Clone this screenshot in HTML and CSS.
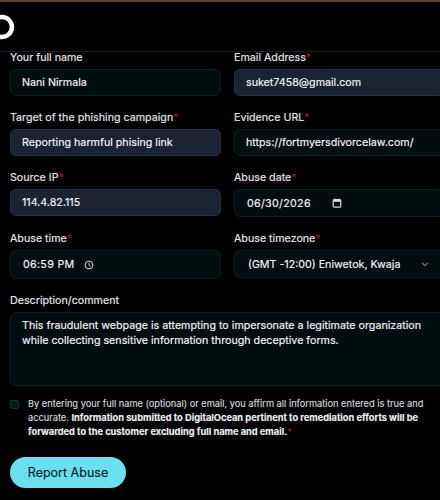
FILE: index.html
```html
<!DOCTYPE html>
<html lang="en">
<head>
    <meta charset="UTF-8">
    <meta name="viewport" content="width=device-width, initial-scale=1.0">
    <title>Report Abuse</title>
    <link rel="stylesheet" href="styles.css">
</head>
<body>
    <div class="topLine"></div>
    <header class="siteHeader">
        <svg class="logo" viewBox="0 0 32 32" width="30" height="30" aria-hidden="true">
            <path d="M16 29v-4.8a8.2 8.2 0 1 0-8.2-8.2H3A13 13 0 1 1 16 29z" fill="#fff"/>
            <rect x="11.2" y="24.2" width="4.8" height="4.8" fill="#fff"/>
            <rect x="7.4" y="24.2" width="3.8" height="3.8" fill="#fff"/>
            <rect x="4.6" y="21" width="3" height="3.2" fill="#fff"/>
        </svg>
    </header>
    <form class="abuseForm">
        <div class="field">
            <label class="fieldLabel">Your full name</label>
            <input class="control" type="text" value="Nani Nirmala">
        </div>
        <div class="field">
            <label class="fieldLabel">Email Address<span class="req">*</span></label>
            <input class="control filled" type="text" value="suket7458@gmail.com">
        </div>
        <div class="field">
            <label class="fieldLabel">Target of the phishing campaign<span class="req">*</span></label>
            <input class="control filled" type="text" value="Reporting harmful phising link">
        </div>
        <div class="field">
            <label class="fieldLabel">Evidence URL<span class="req">*</span></label>
            <input class="control" type="text" value="https://fortmyersdivorcelaw.com/">
        </div>
        <div class="field">
            <label class="fieldLabel">Source IP<span class="req">*</span></label>
            <input class="control filled" type="text" value="114.4.82.115">
        </div>
        <div class="field">
            <label class="fieldLabel">Abuse date<span class="req">*</span></label>
            <div class="control fakeInput dateInput">
                <span class="spaced">06/30/2026</span>
                <svg class="pickerIcon dateIcon" viewBox="0 0 12 12" width="10" height="10" aria-hidden="true">
                    <rect x="1.5" y="2" width="9" height="9" rx="1.2" fill="none" stroke="#d8dcdc" stroke-width="1.4"/>
                    <rect x="1.5" y="2" width="9" height="2.6" fill="#d8dcdc"/>
                    <rect x="3" y="0.8" width="1.3" height="1.6" fill="#d8dcdc"/>
                    <rect x="7.7" y="0.8" width="1.3" height="1.6" fill="#d8dcdc"/>
                </svg>
            </div>
        </div>
        <div class="field">
            <label class="fieldLabel">Abuse time<span class="req">*</span></label>
            <div class="control fakeInput timeInput">
                <span class="spaced">06:59 PM</span>
                <svg class="pickerIcon clockIcon" viewBox="0 0 12 12" width="10" height="10" aria-hidden="true">
                    <circle cx="6" cy="6" r="4.7" fill="none" stroke="#d8dcdc" stroke-width="1.2"/>
                    <path d="M6 3.2V6.2L8 7.4" fill="none" stroke="#d8dcdc" stroke-width="1.1"/>
                </svg>
            </div>
        </div>
        <div class="field">
            <label class="fieldLabel">Abuse timezone<span class="req">*</span></label>
            <div class="control fakeInput selectInput">
                <span>(GMT -12:00) Eniwetok, Kwaja</span>
                <svg class="chevron" viewBox="0 0 10 6" width="8" height="5" aria-hidden="true">
                    <path d="M1.5 1L5 4.5L8.5 1" fill="none" stroke="#c4cbcb" stroke-width="1.2"/>
                </svg>
            </div>
        </div>
        <div class="field descField wide">
            <label class="fieldLabel">Description/comment</label>
            <textarea class="control descBox">This fraudulent webpage is attempting to impersonate a legitimate organization while collecting sensitive information through deceptive forms.</textarea>
        </div>
        <div class="consent wide">
            <span class="checkBox"></span>
            <p class="consentText">By entering your full name (optional) or email, you affirm all information entered is true and accurate. <b>Information submitted to DigitalOcean pertinent to remediation efforts will be forwarded to the customer excluding full name and email.</b><span class="req">*</span></p>
        </div>
        <button class="submitBtn wide" type="button">Report Abuse</button>
    </form>
</body>
</html>
```

FILE: styles.css
```css
html, body{
    margin: 0;
    padding: 0;
    height: 500px;
    overflow: hidden;
}
body{
    background-color: #000;
    color: #e6eaea;
    font-family: Inter, "Liberation Sans", sans-serif;
    font-size: 10.7px;
    -webkit-text-stroke: 0.15px;
}
.topLine{
    height: 2px;
    background-color: #5a4233;
}
.siteHeader{
    height: 49px;
    display: flex;
    align-items: center;
    border-bottom: 1px solid #1d2122;
}
.logo{
    margin-left: -13px;
}
.abuseForm{
    display: grid;
    grid-template-columns: 211px 211px;
    column-gap: 13px;
    padding: 0 0 0 10px;
}
.field{
    display: flex;
    flex-direction: column;
    margin-bottom: 16px;
}
.descField{
    margin-bottom: 11px;
}
.wide{
    grid-column: 1 / 3;
}
.fieldLabel{
    display: block;
    line-height: 11px;
    margin-bottom: 6px;
    color: #e6e9ea;
}
.req{
    color: #7e2418;
}
.control{
    box-sizing: border-box;
    height: 27px;
    margin: 0;
    padding: 0 11px;
    background-color: #020d10;
    border: 1px solid #0f1f21;
    border-radius: 6px;
    color: #f5f7f7;
    font-family: inherit;
    font-size: 10.7px;
    outline: none;
    -webkit-text-stroke: 0.15px;
}
.filled{
    background-color: #1b2232;
    border-color: #263042;
}
.fakeInput{
    display: flex;
    align-items: center;
}
.dateInput{
    height: 28px;
    padding: 0 12px;
}
.timeInput{
    height: 29px;
    padding: 0 12px;
}
.spaced{
    letter-spacing: 0.3px;
}
.pickerIcon{
    flex: none;
}
.dateIcon{
    margin-left: 21px;
}
.clockIcon{
    margin-left: 10px;
}
.selectInput{
    height: 28px;
    padding: 0 13px;
    justify-content: space-between;
}
.chevron{
    margin-right: 2px;
    flex: none;
}
.descBox{
    display: block;
    width: 440px;
    height: 74px;
    padding: 5px 11px;
    line-height: 15px;
    resize: none;
    overflow: hidden;
}
.consent{
    display: flex;
    gap: 9px;
    width: 420px;
}
.checkBox{
    flex: none;
    box-sizing: border-box;
    width: 9px;
    height: 9px;
    margin-top: 3px;
    background-color: #05191a;
    border: 1px solid #163032;
    border-radius: 2px;
}
.consentText{
    margin: 0;
    font-size: 9.25px;
    line-height: 14px;
    color: #d5d9da;
}
.consentText b{
    font-weight: 700;
    color: #eceff0;
}
.submitBtn{
    justify-self: start;
    width: 116px;
    height: 31px;
    margin-top: 18px;
    padding: 0;
    border: none;
    border-radius: 16px;
    background-color: #6bdff0;
    color: #0a1a26;
    font-family: inherit;
    font-size: 12.5px;
    -webkit-text-stroke: 0.15px;
    cursor: pointer;
}
```
